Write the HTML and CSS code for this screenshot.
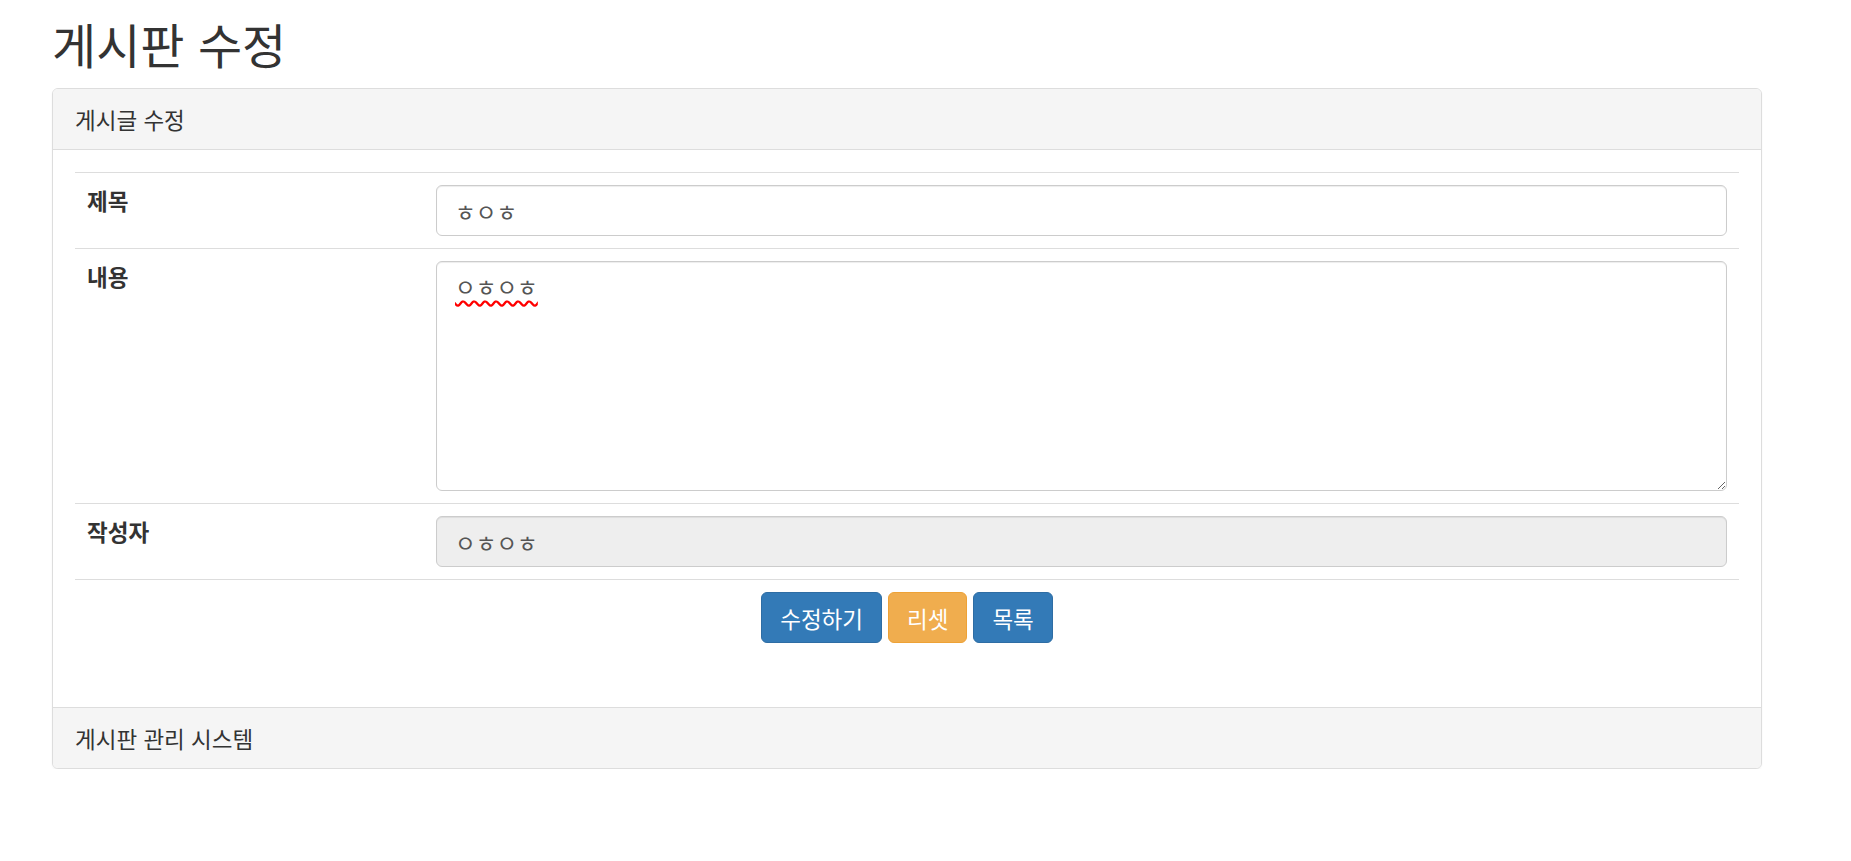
FILE: index.html
```html
<!DOCTYPE html>
<html lang="ko">
<head>
<meta charset="utf-8">
<title>게시판 수정</title>
<link rel="stylesheet" href="styles.css">
</head>
<body>
<div class="page">
  <h2 class="page-title">게시판 수정</h2>
  <div class="panel">
    <div class="panel-heading">게시글 수정</div>
    <div class="panel-body">
      <table class="form-table">
        <colgroup>
          <col class="col-label">
          <col>
        </colgroup>
        <tbody>
          <tr>
            <th>제목</th>
            <td><input class="form-control" type="text" value="ㅎㅇㅎ"></td>
          </tr>
          <tr>
            <th>내용</th>
            <td><textarea class="form-control form-textarea">ㅇㅎㅇㅎ</textarea></td>
          </tr>
          <tr>
            <th>작성자</th>
            <td><input class="form-control" type="text" value="ㅇㅎㅇㅎ" readonly></td>
          </tr>
          <tr>
            <td colspan="2">
              <div class="btn-row">
                <button class="btn btn-primary" type="button">수정하기</button>
                <button class="btn btn-warning" type="button">리셋</button>
                <button class="btn btn-primary" type="button">목록</button>
              </div>
            </td>
          </tr>
        </tbody>
      </table>
    </div>
    <div class="panel-footer">게시판 관리 시스템</div>
  </div>
</div>
</body>
</html>
```

FILE: styles.css
```css
html, body {
  margin: 0;
  padding: 0;
  background: #ffffff;
}

body {
  font-family: "Noto Sans CJK KR", "Liberation Sans", sans-serif;
  font-size: 22.5px;
  line-height: 30px;
  color: #333333;
}

.page {
  padding: 0 0 0 52px;
  width: 1710px;
}

.page-title {
  margin: 18px 0 20px 0;
  font-size: 48px;
  line-height: 50px;
  font-weight: 400;
  color: #333333;
}

.panel {
  box-sizing: border-box;
  width: 1710px;
  border: 1px solid #dddddd;
  border-radius: 6px;
  background: #ffffff;
  box-shadow: 0 1px 2px rgba(0, 0, 0, 0.05);
}

.panel-heading {
  padding: 15px 22px;
  background: #f5f5f5;
  border-bottom: 1px solid #dddddd;
  border-radius: 5px 5px 0 0;
  font-size: 22.5px;
  line-height: 30px;
  color: #333333;
}

.panel-body {
  padding: 22px 22px 22px 22px;
}

.panel-footer {
  padding: 15px 22px;
  background: #f5f5f5;
  border-top: 1px solid #dddddd;
  border-radius: 0 0 5px 5px;
  font-size: 22.5px;
  line-height: 30px;
  color: #333333;
}

.form-table {
  width: 100%;
  border-collapse: collapse;
  table-layout: fixed;
  margin-bottom: 30px;
}

.col-label {
  width: 349px;
}

.form-table th,
.form-table td {
  padding: 12px;
  border-top: 1px solid #dddddd;
  vertical-align: top;
  text-align: left;
  line-height: 30px;
}

.form-table th {
  font-weight: 700;
  color: #333333;
}

.form-control {
  display: block;
  box-sizing: border-box;
  width: 100%;
  height: 51px;
  margin: 0;
  padding: 9px 18px;
  font-family: "Noto Sans CJK KR", "Liberation Sans", sans-serif;
  font-size: 22.5px;
  line-height: 30px;
  color: #555555;
  background: #ffffff;
  border: 1px solid #cccccc;
  border-radius: 6px;
  box-shadow: inset 0 1px 1px rgba(0, 0, 0, 0.075);
  outline: none;
}

.form-control[readonly] {
  background: #eeeeee;
}

.form-textarea {
  height: 230px;
  resize: vertical;
  text-decoration: underline wavy #ff0000;
  text-decoration-skip-ink: none;
  text-underline-offset: 4px;
}

.btn-row {
  display: flex;
  justify-content: center;
  gap: 6px;
}

.btn {
  display: inline-block;
  box-sizing: border-box;
  height: 51px;
  margin: 0;
  padding: 9px 18px;
  font-family: "Noto Sans CJK KR", "Liberation Sans", sans-serif;
  font-size: 22.5px;
  line-height: 30px;
  color: #ffffff;
  border: 1px solid transparent;
  border-radius: 6px;
  cursor: pointer;
}

.btn-primary {
  background: #337ab7;
  border-color: #2e6da4;
}

.btn-warning {
  background: #f0ad4e;
  border-color: #eea236;
}
```
